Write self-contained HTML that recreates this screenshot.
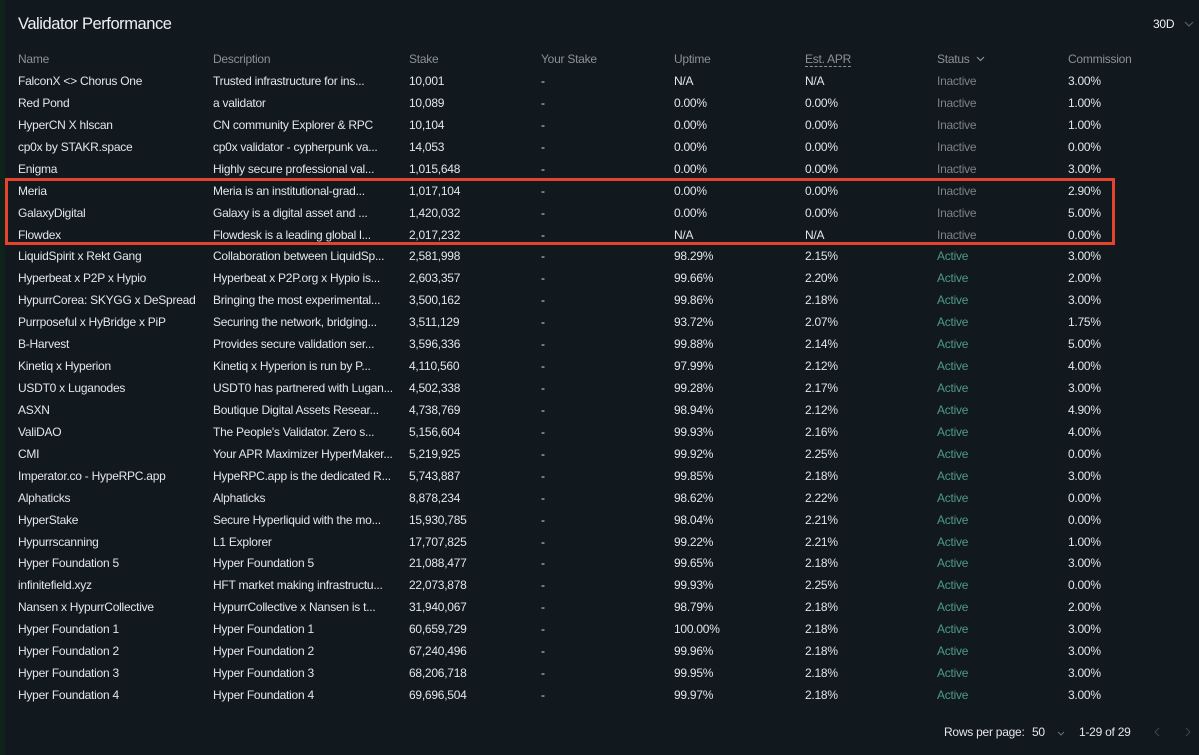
<!DOCTYPE html>
<html><head><meta charset="utf-8"><style>
*{margin:0;padding:0;box-sizing:border-box}
body{width:1199px;height:755px;background:#11181e;font-family:"Liberation Sans",Arial,sans-serif;position:relative;overflow:hidden;color:#e4e6e8;font-size:12px;letter-spacing:-0.25px}
.strip{position:absolute;left:0;top:0;width:5px;height:755px;background:#0f2219}
.title{position:absolute;left:18px;top:15px;font-size:16.5px;color:#eef0f2;letter-spacing:-0.45px}
.sel{position:absolute;left:1153px;top:17px;font-size:12px;color:#eef0f2}
.r{position:absolute;left:0;width:1199px;height:22px;line-height:22px;white-space:nowrap}
.r span{position:absolute;top:0}
.h{color:#8b9196}
.in{color:#7c8287}.ac{color:#4f9a83}
.c0{left:18px}.c1{left:213px}.c2{left:409px}.c3{left:541px}.c4{left:674px}.c5{left:805px}.c6{left:937px}.c7{left:1068px}
.box{position:absolute;left:5px;top:178px;width:1110px;height:67px;border:3px solid #e5432b}
.foot{position:absolute;top:725px;font-size:12px;color:#e4e6e8}
svg{position:absolute}
</style></head><body>
<div class="strip"></div>
<div class="title">Validator Performance</div>
<div class="sel">30D</div>
<svg style="left:1184px;top:21px" width="10" height="6" viewBox="0 0 10 6"><path d="M1 1l4 4 4-4" fill="none" stroke="#5a6065" stroke-width="1.2"/></svg>
<div class="r h" style="top:48px"><span class="c0">Name</span><span class="c1">Description</span><span class="c2">Stake</span><span class="c3">Your Stake</span><span class="c4">Uptime</span><span class="c5" style="border-bottom:1px dashed #8b9196;line-height:14px;top:4px">Est. APR</span><span class="c6">Status</span><span class="c7">Commission</span></div>
<svg style="left:976px;top:56px" width="9" height="6" viewBox="0 0 9 6"><path d="M1 1l3.5 3.5L8 1" fill="none" stroke="#8b9196" stroke-width="1.2"/></svg>
<div id="rows"></div>
<div class="box"></div>
<div class="foot" style="left:944px">Rows per page:</div>
<div class="foot" style="left:1032px">50</div>
<svg style="left:1057px;top:731px" width="8" height="5" viewBox="0 0 8 5"><path d="M1 1l3 3 3-3" fill="none" stroke="#6a7075" stroke-width="1"/></svg>
<div class="foot" style="left:1079px">1-29 of 29</div>
<svg style="left:1154px;top:727px" width="6" height="10" viewBox="0 0 6 10"><path d="M5 1L1 5l4 4" fill="none" stroke="#3f454a" stroke-width="1.1"/></svg>
<svg style="left:1185px;top:727px" width="6" height="10" viewBox="0 0 6 10"><path d="M1 1l4 4-4 4" fill="none" stroke="#3f454a" stroke-width="1.1"/></svg>
<script>
const d=[
["FalconX <> Chorus One","Trusted infrastructure for ins...","10,001","N/A","N/A",0,"3.00%"],
["Red Pond","a validator","10,089","0.00%","0.00%",0,"1.00%"],
["HyperCN X hlscan","CN community Explorer & RPC","10,104","0.00%","0.00%",0,"1.00%"],
["cp0x by STAKR.space","cp0x validator - cypherpunk va...","14,053","0.00%","0.00%",0,"0.00%"],
["Enigma","Highly secure professional val...","1,015,648","0.00%","0.00%",0,"3.00%"],
["Meria","Meria is an institutional-grad...","1,017,104","0.00%","0.00%",0,"2.90%"],
["GalaxyDigital","Galaxy is a digital asset and ...","1,420,032","0.00%","0.00%",0,"5.00%"],
["Flowdex","Flowdesk is a leading global l...","2,017,232","N/A","N/A",0,"0.00%"],
["LiquidSpirit x Rekt Gang","Collaboration between LiquidSp...","2,581,998","98.29%","2.15%",1,"3.00%"],
["Hyperbeat x P2P x Hypio","Hyperbeat x P2P.org x Hypio is...","2,603,357","99.66%","2.20%",1,"2.00%"],
["HypurrCorea: SKYGG x DeSpread","Bringing the most experimental...","3,500,162","99.86%","2.18%",1,"3.00%"],
["Purrposeful x HyBridge x PiP","Securing the network, bridging...","3,511,129","93.72%","2.07%",1,"1.75%"],
["B-Harvest","Provides secure validation ser...","3,596,336","99.88%","2.14%",1,"5.00%"],
["Kinetiq x Hyperion","Kinetiq x Hyperion is run by P...","4,110,560","97.99%","2.12%",1,"4.00%"],
["USDT0 x Luganodes","USDT0 has partnered with Lugan...","4,502,338","99.28%","2.17%",1,"3.00%"],
["ASXN","Boutique Digital Assets Resear...","4,738,769","98.94%","2.12%",1,"4.90%"],
["ValiDAO","The People's Validator. Zero s...","5,156,604","99.93%","2.16%",1,"4.00%"],
["CMI","Your APR Maximizer HyperMaker...","5,219,925","99.92%","2.25%",1,"0.00%"],
["Imperator.co - HypeRPC.app","HypeRPC.app is the dedicated R...","5,743,887","99.85%","2.18%",1,"3.00%"],
["Alphaticks","Alphaticks","8,878,234","98.62%","2.22%",1,"0.00%"],
["HyperStake","Secure Hyperliquid with the mo...","15,930,785","98.04%","2.21%",1,"0.00%"],
["Hypurrscanning","L1 Explorer","17,707,825","99.22%","2.21%",1,"1.00%"],
["Hyper Foundation 5","Hyper Foundation 5","21,088,477","99.65%","2.18%",1,"3.00%"],
["infinitefield.xyz","HFT market making infrastructu...","22,073,878","99.93%","2.25%",1,"0.00%"],
["Nansen x HypurrCollective","HypurrCollective x Nansen is t...","31,940,067","98.79%","2.18%",1,"2.00%"],
["Hyper Foundation 1","Hyper Foundation 1","60,659,729","100.00%","2.18%",1,"3.00%"],
["Hyper Foundation 2","Hyper Foundation 2","67,240,496","99.96%","2.18%",1,"3.00%"],
["Hyper Foundation 3","Hyper Foundation 3","68,206,718","99.95%","2.18%",1,"3.00%"],
["Hyper Foundation 4","Hyper Foundation 4","69,696,504","99.97%","2.18%",1,"3.00%"]];
const esc=s=>s.replace(/&/g,"&amp;").replace(/</g,"&lt;").replace(/>/g,"&gt;");
let h="";d.forEach((r,i)=>{h+=`<div class="r" style="top:${70+i*21.93}px"><span class="c0">${esc(r[0])}</span><span class="c1">${esc(r[1])}</span><span class="c2">${r[2]}</span><span class="c3">-</span><span class="c4">${r[3]}</span><span class="c5">${r[4]}</span><span class="c6 ${r[5]?'ac':'in'}">${r[5]?'Active':'Inactive'}</span><span class="c7">${r[6]}</span></div>`});
document.getElementById("rows").innerHTML=h;
</script>
</body></html>
